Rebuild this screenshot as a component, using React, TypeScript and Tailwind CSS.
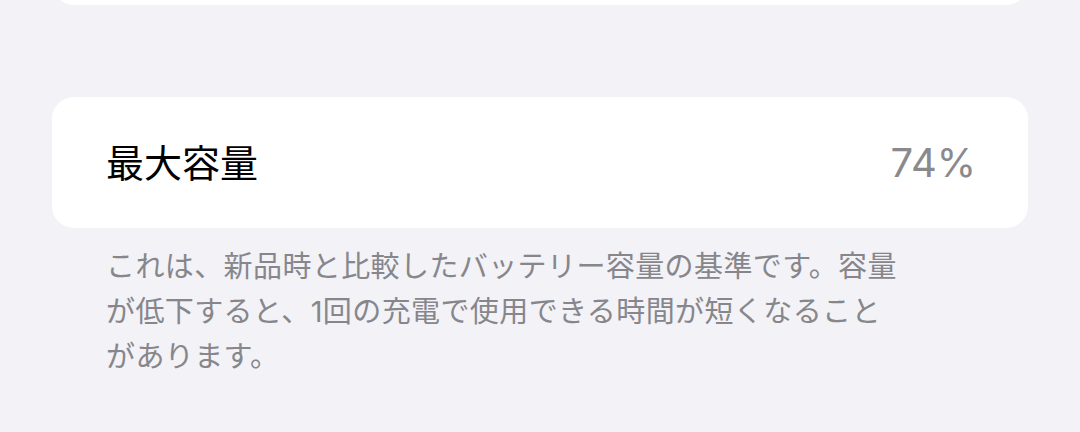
import React from 'react';

function App() {
  return (
    <div
      className="min-h-[432px] w-full overflow-hidden bg-[#f2f2f7] px-[52px]"
      style={{ fontFamily: '"Inter", "Noto Sans CJK JP", sans-serif' }}
    >
      {/* previous group, cut off at the top */}
      <div className="-mt-[60px] h-[65px] rounded-[22px] bg-white" />

      {/* 最大容量 row */}
      <div className="mt-[92px] flex h-[131px] items-center justify-between rounded-[22px] bg-white pl-[54px] pr-[52px]">
        <span className="text-[38px] leading-none text-black">最大容量</span>
        <span className="text-[40px] leading-none text-[#8a8a8e]">74%</span>
      </div>

      {/* footer note */}
      <p className="mt-[16px] pl-[54px] text-[29px] leading-[45px] tracking-[0.4px] text-[#86868b]">
        これは、新品時と比較したバッテリー容量の基準です。容量
        <br />
        が低下すると、1回の充電で使用できる時間が短くなること
        <br />
        があります。
      </p>
    </div>
  );
}

export default App;
